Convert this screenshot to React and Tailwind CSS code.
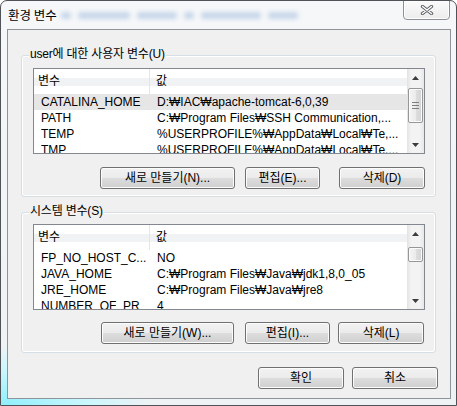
import React from 'react';

const userVars = [
    ['CATALINA_HOME', 'D:₩IAC₩apache-tomcat-6,0,39'],
    ['PATH', 'C:₩Program Files₩SSH Communication,...'],
    ['TEMP', '%USERPROFILE%₩AppData₩Local₩Te,...'],
    ['TMP', '%USERPROFILE%₩AppData₩Local₩Te,...'],
];

const systemVars = [
    ['FP_NO_HOST_C...', 'NO'],
    ['JAVA_HOME', 'C:₩Program Files₩Java₩jdk1,8,0_05'],
    ['JRE_HOME', 'C:₩Program Files₩Java₩jre8'],
    ['NUMBER_OF_PR', '4'],
];

const Arrow = ({ down }) => (
    <svg width="7" height="4" viewBox="0 0 7 4">
        <path d={down ? 'M0 0H7L3.5 4z' : 'M3.5 0L7 4H0z'} fill="#3c3c3c" />
    </svg>
);

const ScrollBar = ({ thumbClass, grip }) => (
    <div className="flex w-[17px] flex-col bg-[linear-gradient(to_right,#e3e3e3,#f3f3f3_25%,#f3f3f3_75%,#e8e8e8)]">
        <div className="flex h-[17px] items-center justify-center">
            <Arrow />
        </div>
        <div className="flex-1">
            <div
                className={`mx-auto flex w-[15px] flex-col items-center justify-center gap-[2px] rounded-[2px] border border-[#979797] bg-[linear-gradient(to_right,#f5f5f5,#ebebeb_50%,#dedede_51%,#d3d3d3)] shadow-[inset_0_0_0_1px_#fbfbfb] ${thumbClass}`}
            >
                {grip && (
                    <>
                        <div className="h-[1px] w-[7px] bg-[#7d7d7d]" />
                        <div className="h-[1px] w-[7px] bg-[#7d7d7d]" />
                        <div className="h-[1px] w-[7px] bg-[#7d7d7d]" />
                    </>
                )}
            </div>
        </div>
        <div className="flex h-[17px] items-center justify-center">
            <Arrow down />
        </div>
    </div>
);

const ListView = ({ rows, selected, thumbClass, grip }) => (
    <div className="flex h-[86px] w-[392px] border border-[#828790] bg-white">
        <div className="min-w-0 flex-1 overflow-hidden">
            <div className="flex h-[25px] bg-[linear-gradient(to_bottom,#ffffff_0%,#ffffff_36%,#f1f2f4_38%,#f1f2f4_66%,#ffffff_68%)] leading-[25px]">
                <div className="w-[116px] border-r border-[#e3e5e8] pl-[4px]">변수</div>
                <div className="flex-1 pl-[6px]">값</div>
            </div>
            {rows.map((row, i) => (
                <div
                    key={row[0]}
                    className={`flex h-[16px] whitespace-nowrap leading-[16px] ${i === selected ? 'bg-[#e6e6e6]' : ''}`}
                >
                    <div className="w-[117px] overflow-hidden pl-[7px]">{row[0]}</div>
                    <div className="flex-1 overflow-hidden pl-[6px]">{row[1]}</div>
                </div>
            ))}
        </div>
        <ScrollBar thumbClass={thumbClass} grip={grip} />
    </div>
);

const Button = ({ children, className = '' }) => (
    <div
        className={`flex h-[22px] items-center justify-center rounded-[3px] border border-[#707070] bg-[linear-gradient(to_bottom,#f2f2f2_0%,#ebebeb_50%,#dddddd_51%,#cfcfcf_100%)] shadow-[inset_0_0_0_1px_#fcfcfc] ${className}`}
    >
        {children}
    </div>
);

const GroupBox = ({ label, children, className = '' }) => (
    <div
        className={`relative ml-[13px] w-[415px] rounded-[3px] border border-[#d5dfe5] pl-[11px] shadow-[inset_0_0_0_1px_#ffffff] ${className}`}
    >
        <span className="absolute left-[7px] top-[-9px] bg-[#f0f0f0] px-[1px] leading-[14px] tracking-[-0.2px]">{label}</span>
        {children}
    </div>
);

export default function App() {
    return (
        <div className="relative h-[406px] w-[457px] overflow-hidden rounded-t-[7px] border border-[#4f5358] bg-[radial-gradient(ellipse_150px_60px_at_0%_100%,#8eeffc,#c8f7fd_55%,transparent_100%),linear-gradient(to_bottom,#f5f7f9,#eef2f5)] font-['Liberation_Sans','Noto_Sans_CJK_KR',sans-serif] text-[12px] text-black">
            {/* Title bar */}
            <div className="flex h-[28px] items-center pl-[7px] pt-[1px]">
                <span className="font-['Noto_Sans_CJK_KR',sans-serif] text-[12.5px]">환경 변수</span>
                <div className="ml-[4px] flex items-center gap-[7px] opacity-50 blur-[2px]">
                    <div className="h-[7px] w-[10px] rounded-full bg-[#9db8db]" />
                    <div className="h-[7px] w-[52px] rounded-full bg-[#9db8db]" />
                    <div className="h-[7px] w-[40px] rounded-full bg-[#9db8db]" />
                    <div className="h-[7px] w-[10px] rounded-full bg-[#9db8db]" />
                    <div className="h-[7px] w-[60px] rounded-full bg-[#9db8db]" />
                    <div className="h-[7px] w-[30px] rounded-full bg-[#9db8db]" />
                </div>
            </div>

            {/* Close button */}
            <div className="absolute left-[402px] top-[-1px] flex h-[20px] w-[47px] items-center justify-center rounded-b-[4px] border border-[#8c9095] bg-[linear-gradient(to_bottom,#fbfbfb,#ececec)] shadow-[inset_0_0_0_1px_#ffffff]">
                <svg width="14" height="10" viewBox="0 0 14 10">
                    <path d="M2.5 1.5L11.5 8.5M11.5 1.5L2.5 8.5" stroke="#5f6368" strokeWidth="3.4" strokeLinecap="round" />
                    <path d="M2.5 1.5L11.5 8.5M11.5 1.5L2.5 8.5" stroke="#ffffff" strokeWidth="1.4" strokeLinecap="round" />
                </svg>
            </div>

            {/* Client area */}
            <div className="ml-[6px] h-[370px] w-[444px] border border-[#8e949a] bg-[#f0f0f0]">
                <GroupBox label="user에 대한 사용자 변수(U)" className="mt-[25px] pb-[7px] pt-[12px]">
                    <ListView rows={userVars} selected={0} thumbClass="mt-[2px] h-[35px]" grip />
                    <div className="mt-[13px] flex">
                        <Button className="ml-[67px] w-[135px]">새로 만들기(N)...</Button>
                        <Button className="ml-[10px] w-[75px]">편집(E)...</Button>
                        <Button className="ml-[19px] w-[86px]">삭제(D)</Button>
                    </div>
                </GroupBox>

                <GroupBox label="시스템 변수(S)" className="mt-[15px] pb-[8px] pt-[11px]">
                    <ListView rows={systemVars} selected={-1} thumbClass="mt-[5px] h-[15px]" />
                    <div className="mt-[12px] flex">
                        <Button className="ml-[68px] w-[133px]">새로 만들기(W)...</Button>
                        <Button className="ml-[11px] w-[85px]">편집(I)...</Button>
                        <Button className="ml-[8px] w-[86px]">삭제(L)</Button>
                    </div>
                </GroupBox>

                <div className="mt-[14px] flex justify-end gap-[8px] pr-[12px]">
                    <Button className="w-[86px]">확인</Button>
                    <Button className="w-[86px]">취소</Button>
                </div>
            </div>
        </div>
    );
}
